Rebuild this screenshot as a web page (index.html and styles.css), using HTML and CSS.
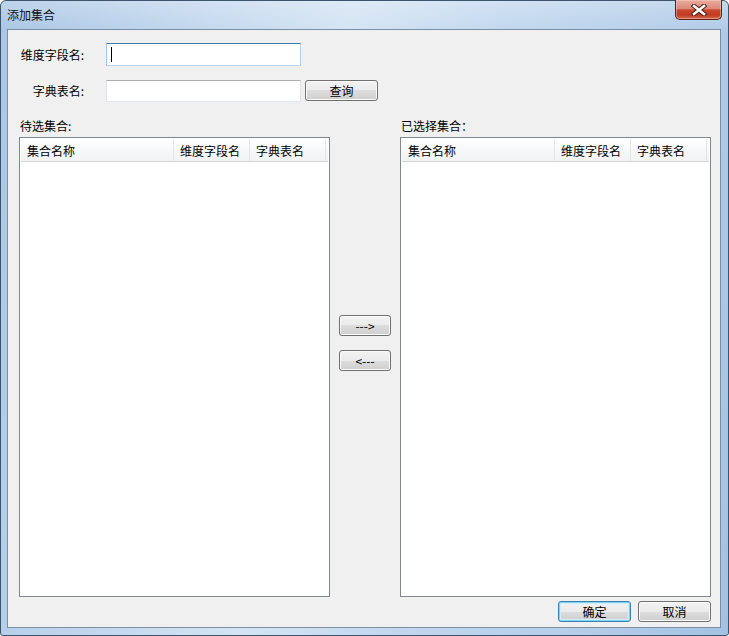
FILE: index.html
```html
<!DOCTYPE html>
<html lang="zh-CN">
<head>
<meta charset="utf-8">
<title>添加集合</title>
<link rel="stylesheet" href="styles.css">
</head>
<body>
<div class="window">
  <div class="titlebar">
    <span class="title">添加集合</span>
    <div class="close-btn">
      <svg width="16" height="12" viewBox="0 0 16 12">
        <path d="M3 2 L13 10 M13 2 L3 10" stroke="#4a1e18" stroke-width="4.6" stroke-linecap="square"/>
        <path d="M3 2 L13 10 M13 2 L3 10" stroke="#ffffff" stroke-width="2.6" stroke-linecap="square"/>
      </svg>
    </div>
  </div>
  <div class="client">
    <div class="row row1">
      <label class="lbl">维度字段名:</label>
      <div class="input focused"><span class="caret"></span></div>
    </div>
    <div class="row row2">
      <label class="lbl">字典表名:</label>
      <div class="input"></div>
      <button class="btn btn-query">查询</button>
    </div>
    <div class="lists">
      <div class="col">
        <div class="list-label">待选集合:</div>
        <div class="listbox">
          <div class="header">
            <div class="cell c1">集合名称</div>
            <div class="cell c2">维度字段名</div>
            <div class="cell c3">字典表名</div>
          </div>
        </div>
      </div>
      <div class="mid">
        <button class="btn btn-move">---&gt;</button>
        <button class="btn btn-move">&lt;---</button>
      </div>
      <div class="col">
        <div class="list-label">已选择集合：</div>
        <div class="listbox">
          <div class="header">
            <div class="cell c1">集合名称</div>
            <div class="cell c2">维度字段名</div>
            <div class="cell c3">字典表名</div>
          </div>
        </div>
      </div>
    </div>
    <div class="footer">
      <button class="btn btn-foot btn-default">确定</button>
      <button class="btn btn-foot">取消</button>
    </div>
  </div>
</div>
</body>
</html>
```

FILE: styles.css
```css
html, body {
  margin: 0;
  padding: 0;
}
body {
  width: 729px;
  height: 636px;
  overflow: hidden;
  font-family: "Noto Sans CJK SC", "Liberation Sans", sans-serif;
  font-size: 12px;
  color: #000;
  background: #ffffff;
}
.window {
  box-sizing: border-box;
  width: 729px;
  height: 636px;
  border: 1px solid #3e546c;
  border-radius: 6px 6px 3px 3px;
  padding: 0 7px 7px 6px;
  display: flex;
  flex-direction: column;
  background:
    linear-gradient(to bottom, rgba(255,255,255,0.25), rgba(255,255,255,0) 30px),
    linear-gradient(100deg, #a9c6e5 0%, #c3d8ee 25%, #d4e4f4 42%, #c2d8ef 60%, #b2cce8 85%, #a3c2e3 100%);
}
.titlebar {
  height: 28px;
  display: flex;
  align-items: flex-start;
}
.title {
  line-height: 28px;
  font-size: 12px;
  color: #111;
  padding-left: 0;
}
.close-btn {
  box-sizing: border-box;
  margin-left: auto;
  margin-right: -1px;
  margin-top: -1px;
  width: 47px;
  height: 20px;
  border: 1px solid #5b2017;
  border-top: none;
  border-radius: 0 0 5px 5px;
  background: linear-gradient(to bottom, #e9ac9e 0%, #dc8a78 45%, #c9492f 52%, #c03a20 78%, #d46a4f 100%);
  box-shadow: inset 0 0 0 1px rgba(255, 210, 200, 0.45);
  display: flex;
  align-items: center;
  justify-content: center;
}
.close-btn svg {
  display: block;
}
.client {
  flex: 1;
  border: 1px solid #7b8ea4;
  background: #f0f0f0;
  padding-top: 13px;
}
.row {
  display: flex;
  align-items: flex-start;
}
.lbl {
  width: 76px;
  margin-right: 22px;
  text-align: right;
  white-space: nowrap;
}
.row1 {
  height: 23px;
}
.row1 .lbl {
  line-height: 23px;
}
.row2 {
  margin-top: 14px;
  height: 22px;
}
.row2 .lbl {
  line-height: 22px;
}
.input {
  box-sizing: border-box;
  width: 195px;
  height: 22px;
  background: #fff;
  border: 1px solid #e2e3ea;
  border-top-color: #abadb3;
  border-bottom-color: #e3e9ef;
  position: relative;
}
.input.focused {
  height: 23px;
  border-color: #b5d3ea;
  border-top-color: #3d7bad;
  border-left-color: #a8c9e4;
}
.caret {
  position: absolute;
  left: 4px;
  top: 3px;
  width: 1px;
  height: 15px;
  background: #000;
}
.btn {
  box-sizing: border-box;
  font-family: "Noto Sans CJK SC", "Liberation Sans", sans-serif;
  font-size: 12px;
  color: #000;
  padding: 0;
  border: 1px solid #707070;
  border-radius: 3px;
  background: linear-gradient(to bottom, #f2f2f2 0%, #ebebeb 50%, #dddddd 50%, #cfcfcf 100%);
  box-shadow: inset 0 0 0 1px #fbfbfb;
  height: 21px;
  line-height: 18px;
}
.btn-query {
  width: 73px;
  margin-left: 4px;
}
.lists {
  display: grid;
  grid-template-columns: 311px 70px 311px;
  margin-top: 16px;
  padding-left: 11px;
}
.list-label {
  height: 15px;
  line-height: 15px;
  margin-bottom: 4px;
  padding-left: 1px;
  white-space: nowrap;
}
.listbox {
  box-sizing: border-box;
  width: 311px;
  height: 460px;
  border: 1px solid #828790;
  background: #fff;
  padding: 1px;
}
.header {
  box-sizing: border-box;
  height: 23px;
  display: flex;
  background: linear-gradient(to bottom, #ffffff 0%, #f7f8f9 50%, #f1f2f4 100%);
  border-bottom: 1px solid #d5d5d5;
}
.cell {
  box-sizing: border-box;
  height: 22px;
  padding: 2px 0 0 6px;
  line-height: 20px;
  border-right: 1px solid #e3e4e6;
  white-space: nowrap;
}
.c1 { width: 153px; }
.c2 { width: 76px; }
.c3 { width: 76px; }
.mid {
  padding-top: 197px;
  display: flex;
  flex-direction: column;
  align-items: center;
  gap: 14px;
}
.btn-move {
  width: 52px;
}
.footer {
  display: flex;
  justify-content: flex-end;
  gap: 7px;
  margin-top: 4px;
  padding-right: 9px;
}
.btn-foot {
  width: 73px;
}
.btn-default {
  border-color: #3c7fb1;
  box-shadow: inset 0 0 0 1px #7fd4f4, inset 0 0 0 2px #d2eef9;
}
```
